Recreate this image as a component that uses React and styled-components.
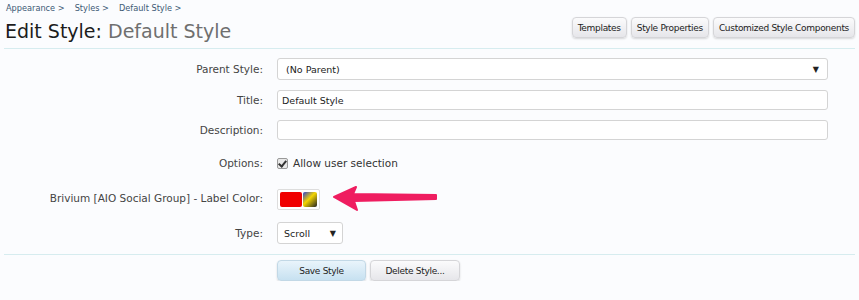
import styled, { createGlobalStyle } from "styled-components";

const GlobalStyle = createGlobalStyle`
  body {
    margin: 0;
    background: #fbfcfe;
    font-family: "DejaVu Sans", Verdana, sans-serif;
    color: #333;
  }
`;

const Page = styled.div`
  padding: 2px 4px 0 4px;
  width: 851px;
`;

const Crumbs = styled.div`
  display: flex;
  gap: 10px;
  font-size: 8.2px;
  color: #3d5a75;
  padding-left: 2px;
  height: 13px;
  line-height: 13px;
`;

const Header = styled.div`
  display: flex;
  justify-content: space-between;
  align-items: flex-start;
  border-bottom: 1px solid #d6ecef;
  height: 33px;
`;

const Heading = styled.h1`
  margin: 5px 0 0 1px;
  font-size: 19px;
  font-weight: normal;
  color: #1c1c1c;
  span {
    color: #6f6f6f;
  }
`;

const TopButtons = styled.div`
  display: flex;
  gap: 4px;
  margin-top: 2px;
`;

const Button = styled.button`
  font-family: "DejaVu Sans", sans-serif;
  font-size: 9px;
  letter-spacing: -0.3px;
  color: #222;
  height: ${(p) => p.$h || 21}px;
  padding: 0 ${(p) => p.$pad || 5}px;
  min-width: ${(p) => p.$w || 0}px;
  border: 1px solid ${(p) => (p.$primary ? "#c2d8e6" : "#d5d5d8")};
  border-radius: 4px;
  background: ${(p) =>
    p.$primary
      ? "linear-gradient(#e9f4fb, #c7e1f1)"
      : "linear-gradient(#fbfbfc, #e6e6ea)"};
  box-shadow: 0 1px 2px rgba(0, 0, 0, 0.15);
`;

const Form = styled.div`
  display: grid;
  grid-template-columns: 259px 551px;
  column-gap: 14px;
  row-gap: 10px;
  align-items: center;
  padding-top: 9px;
  padding-bottom: 10px;
  border-bottom: 1px solid #d6ecef;
`;

const Label = styled.div`
  text-align: right;
  font-size: 10.5px;
  color: #444;
  margin-top: ${(p) => p.$mt || 0}px;
`;

const Field = styled.div`
  display: flex;
  align-items: center;
  height: ${(p) => p.$h || 20}px;
  margin-top: ${(p) => p.$mt || 0}px;
`;

const Input = styled.div`
  box-sizing: border-box;
  width: ${(p) => p.$w || 551}px;
  height: ${(p) => p.$h || 20}px;
  border: 1px solid #d4d4d4;
  border-radius: 3px;
  background: #fff;
  font-size: 9.5px;
  color: #222;
  padding: 0 ${(p) => p.$pl || 4}px;
  display: flex;
  align-items: center;
  justify-content: space-between;
`;

const Caret = styled.span`
  font-size: 8px;
  color: #222;
`;

const Check = styled.span`
  display: inline-block;
  width: 9px;
  height: 9px;
  border: 1px solid #999;
  border-radius: 2px;
  background: #e8e8e8;
  position: relative;
  margin-right: 5px;
  &::after {
    content: "";
    position: absolute;
    left: 2px;
    top: 0px;
    width: 3px;
    height: 6px;
    border: solid #333;
    border-width: 0 2px 2px 0;
    transform: rotate(40deg);
  }
`;

const OptionText = styled.span`
  font-size: 10.5px;
  color: #333;
`;

const Swatch = styled.div`
  position: relative;
  display: flex;
  gap: 1px;
  padding: 2px;
  border: 1px solid #ddd;
  border-radius: 2px;
  background: #fff;
`;

const Color = styled.div`
  width: ${(p) => p.$w}px;
  height: 15px;
  border-radius: 2px;
  background: ${(p) => p.$bg};
`;

const Arrow = styled.svg`
  position: absolute;
  left: 54px;
  top: -4px;
`;

const Actions = styled.div`
  display: flex;
  gap: 4px;
  padding-left: 273px;
  padding-top: 5px;
`;

export default function App() {
  return (
    <Page>
      <GlobalStyle />
      <Crumbs>
        <span>Appearance &gt;</span>
        <span>Styles &gt;</span>
        <span>Default Style &gt;</span>
      </Crumbs>
      <Header>
        <Heading>
          Edit Style: <span>Default Style</span>
        </Heading>
        <TopButtons>
          <Button>Templates</Button>
          <Button>Style Properties</Button>
          <Button>Customized Style Components</Button>
        </TopButtons>
      </Header>
      <Form>
        <Label>Parent Style:</Label>
        <Field $h={22}>
          <Input $h={22} $pl={8}>
            (No Parent)
            <Caret>▼</Caret>
          </Input>
        </Field>
        <Label>Title:</Label>
        <Field>
          <Input>Default Style</Input>
        </Field>
        <Label>Description:</Label>
        <Field>
          <Input />
        </Field>
        <Label $mt={3}>Options:</Label>
        <Field $mt={3}>
          <Check />
          <OptionText>Allow user selection</OptionText>
        </Field>
        <Label $mt={4}>Brivium [AIO Social Group] - Label Color:</Label>
        <Field $mt={6}>
          <Swatch>
            <Color $w={22} $bg="#f00000" />
            <Color
              $w={14}
              $bg="linear-gradient(135deg, #2b3fd0 0%, #f3d400 45%, #222 100%)"
            />
            <Arrow width="106" height="26" viewBox="0 0 106 26">
              <path
                d="M2 11 L24 1 L21 8 L104 9 L104 13 L22 15 L25 24 Z"
                fill="#ef1d60"
                stroke="#ef1d60"
                strokeLinejoin="round"
                strokeWidth="2"
              />
            </Arrow>
          </Swatch>
        </Field>
        <Label $mt={3}>Type:</Label>
        <Field $h={22} $mt={3}>
          <Input $w={66} $h={22} $pl={6}>
            Scroll
            <Caret>▼</Caret>
          </Input>
        </Field>
      </Form>
      <Actions>
        <Button $primary $w={89} $h={21}>
          Save Style
        </Button>
        <Button $w={90} $h={21}>
          Delete Style...
        </Button>
      </Actions>
    </Page>
  );
}
